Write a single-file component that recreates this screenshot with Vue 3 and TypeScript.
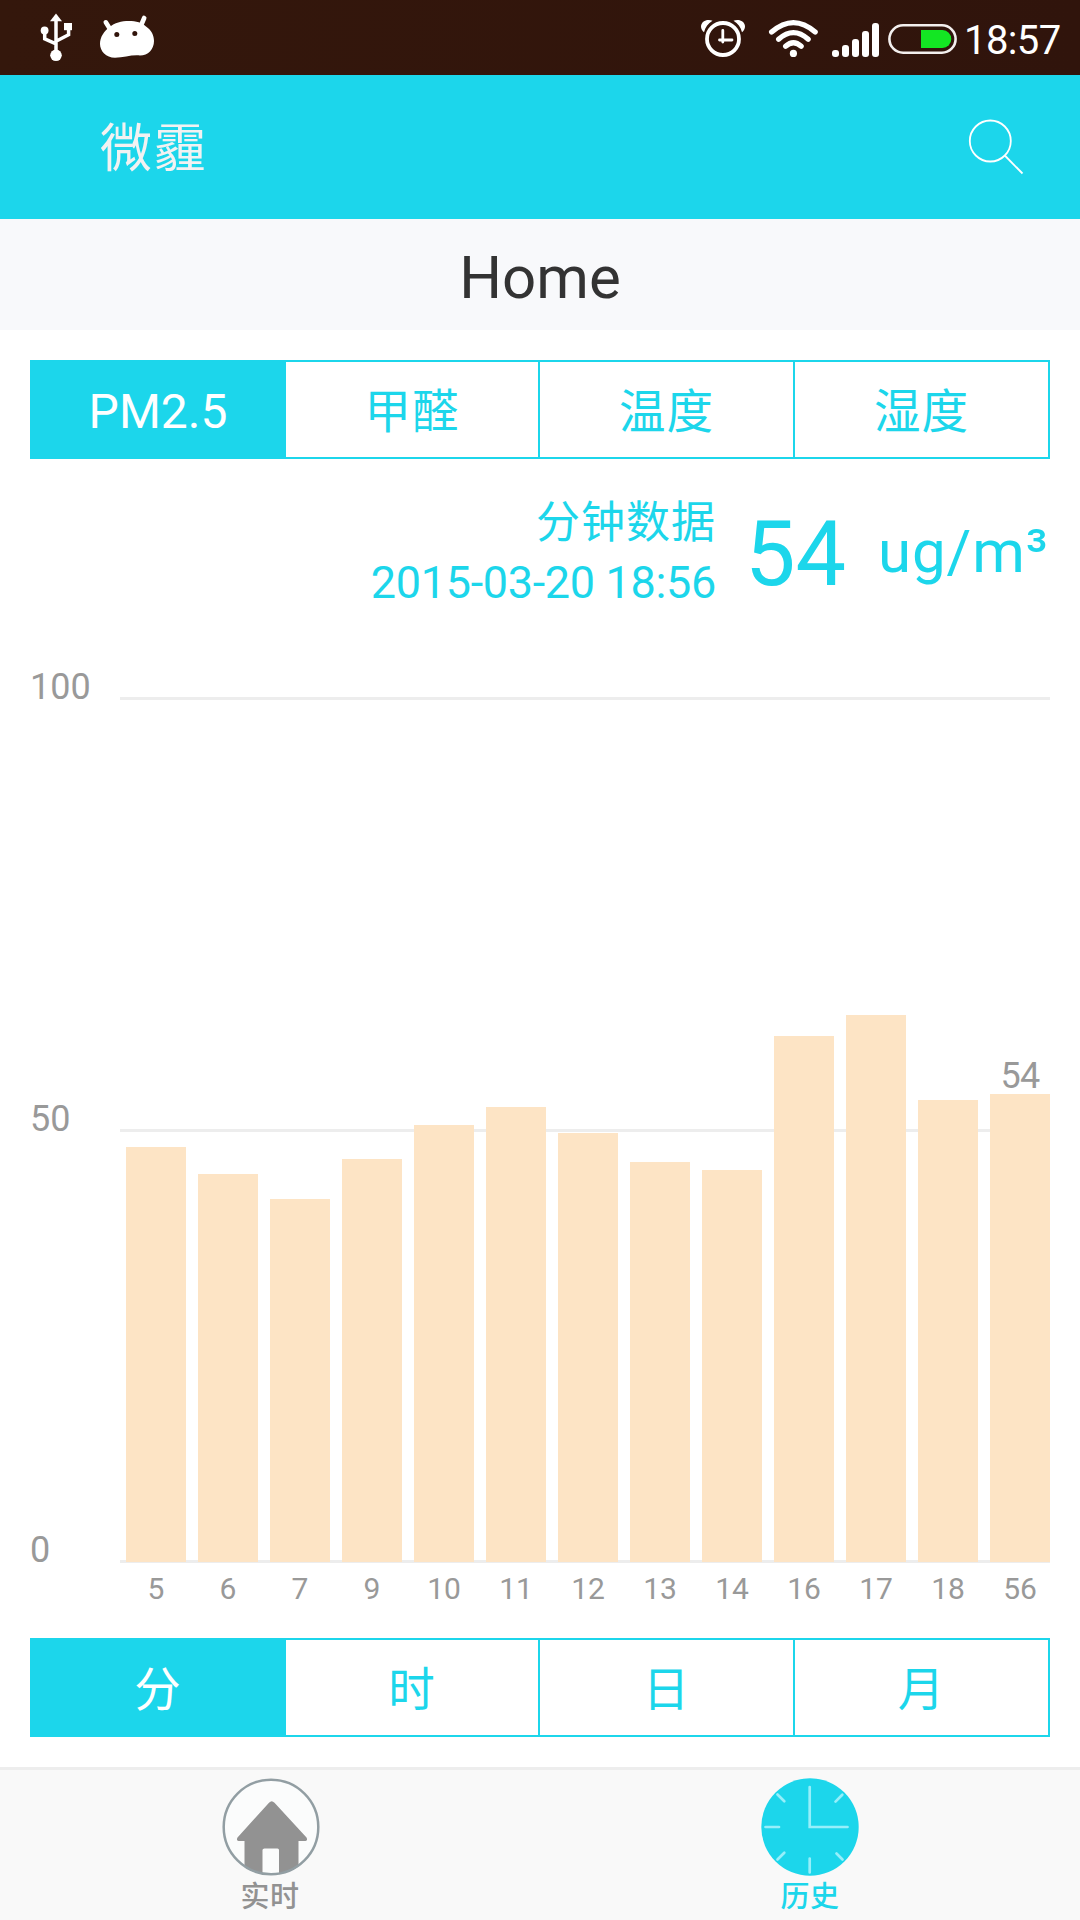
<script setup lang="ts">
import { ref } from 'vue'

interface Bar {
  label: string
  height: number
  value?: number
}

const metrics: string[] = ['PM2.5', '甲醛', '温度', '湿度']
const periods: string[] = ['分', '时', '日', '月']
const ticks: number[] = [100, 50, 0]

const metric = ref(0)
const period = ref(0)

const bars: Bar[] = [
  { label: '5', height: 415 },
  { label: '6', height: 388 },
  { label: '7', height: 363 },
  { label: '9', height: 403 },
  { label: '10', height: 437 },
  { label: '11', height: 455 },
  { label: '12', height: 429 },
  { label: '13', height: 400 },
  { label: '14', height: 392 },
  { label: '16', height: 526 },
  { label: '17', height: 547 },
  { label: '18', height: 462 },
  { label: '56', height: 468, value: 54 },
]
</script>

<template>
  <div class="screen">
    <div class="status">
      <svg class="status-left" width="160" height="75" viewBox="0 0 160 75" fill="#fff">
        <path d="M56 13.5 62 21.2H50Z" />
        <path d="M56 20v32M44.7 32v6.8L56 43.8M68.6 28v6.7L56 41.3" fill="none" stroke="#fff" stroke-width="3.5" />
        <circle cx="56" cy="55.3" r="5.8" />
        <circle cx="44.6" cy="30.5" r="3.9" />
        <rect x="64" y="23" width="8" height="7.2" />
        <path d="M105.8 22.3 110 29M144.2 18l-3 7" stroke="#fff" stroke-width="4.6" stroke-linecap="round" />
        <path d="M110 27C118 19.3 139 19 146 26.5C151.5 30 154 35.5 154 41C154 49.5 148 55.5 140 55.5C132 54.5 124 57.7 115 57.7C106 57.7 100 51 100 44C100 37 104 31 110 27Z" />
        <circle cx="116.8" cy="34.6" r="2.5" fill="#31140b" />
        <circle cx="134.8" cy="33.5" r="2.5" fill="#31140b" />
      </svg>
      <svg class="status-right" width="260" height="75" viewBox="700 0 260 75" fill="#fff">
        <circle cx="723" cy="39" r="16" fill="none" stroke="#fff" stroke-width="3.8" />
        <path d="M722.8 30.5V42M719.5 40H732" fill="none" stroke="#fff" stroke-width="2.8" stroke-linecap="round" />
        <path d="M704 32.3C700 29 700 24 704 21.3C707 19.3 710.5 19.8 712.5 20.8C708 23.5 705.5 27 704 32.3Z" />
        <path d="M742 32.3C746 29 746 24 742 21.3C739 19.3 735.5 19.8 733.5 20.8C738 23.5 740.5 27 742 32.3Z" />
        <g fill="none" stroke="#fff" stroke-width="5.2" stroke-linecap="round">
          <path d="M771.6 32Q793.4 13.2 815.2 32" />
          <path d="M778.6 39.2Q793.4 26 808.2 39.2" />
          <path d="M785.6 46.3Q793.4 39.3 801.2 46.3" />
        </g>
        <circle cx="793.4" cy="53.4" r="3.6" />
        <rect x="832" y="50" width="7" height="7" rx="3" />
        <rect x="842" y="45" width="7" height="12" rx="3" />
        <rect x="852" y="39" width="7" height="18" rx="3" />
        <rect x="862" y="31" width="7" height="26" rx="3" />
        <rect x="872" y="23" width="7" height="34" rx="3" />
        <rect x="889.4" y="25.3" width="66.2" height="27.4" rx="13.7" fill="none" stroke="#f3efee" stroke-width="2.6" />
        <path d="M921 30H942.5A8.8 9 0 0 1 942.5 48H921Z" fill="#13e623" />
      </svg>
      <span class="time">18:57</span>
    </div>

    <header class="header">
      <span class="brand">微霾</span>
      <svg class="search" width="56" height="56" viewBox="968 119 56 56" fill="none" stroke="#fff" stroke-width="1.8">
        <circle cx="990.3" cy="141" r="20.5" />
        <path d="M1004.8 155.5 1022.5 173.5" />
      </svg>
    </header>

    <h1 class="title">Home</h1>

    <nav class="tabs">
      <button v-for="(name, i) in metrics" :key="name" :class="['tab', { active: metric === i, latin: i === 0 }]" @click="metric = i">{{ name }}</button>
    </nav>

    <section class="reading">
      <div class="when">
        <span class="kind">分钟数据</span>
        <span class="date">2015-03-20 18:56</span>
      </div>
      <span class="amount">54</span>
      <span class="unit">ug/m³</span>
    </section>

    <section class="chart">
      <div class="axis">
        <div v-for="t in ticks" :key="t" class="tick">
          <span class="tick-label">{{ t }}</span>
          <span class="line"></span>
        </div>
      </div>
      <div class="bars">
        <div v-for="b in bars" :key="b.label" class="column">
          <span v-if="b.value" class="value">{{ b.value }}</span>
          <div class="bar" :style="{ height: b.height + 'px' }"></div>
        </div>
      </div>
    </section>
    <div class="labels">
      <span v-for="b in bars" :key="b.label">{{ b.label }}</span>
    </div>

    <nav class="tabs periods">
      <button v-for="(name, i) in periods" :key="name" :class="['tab', { active: period === i }]" @click="period = i">{{ name }}</button>
    </nav>

    <footer class="footer">
      <div class="item">
        <svg width="100" height="100" viewBox="0 0 100 100">
          <defs>
            <clipPath id="disc"><circle cx="50" cy="50" r="48" /></clipPath>
          </defs>
          <circle cx="50" cy="50" r="47.5" fill="#fbfcfc" />
          <path clip-path="url(#disc)" d="M50.7 24.2Q52 24.2 53.5 25.8L85.5 60.5Q87 63.5 84.500 64H77.5V100H58V73Q58 71.5 56.5 71.5H43.5Q41.5 71.5 41.5 73V100H23.5V64H17.5Q15 63.5 16.5 60.5L48 25.8Q49.4 24.2 50.7 24.2Z" fill="#929292" />
          <circle cx="50" cy="50" r="47.3" fill="none" stroke="#929ea3" stroke-width="2.5" />
        </svg>
        <span>实时</span>
      </div>
      <div class="item current">
        <svg width="100" height="100" viewBox="0 0 100 100">
          <circle cx="50" cy="50" r="48.7" fill="#1cd6eb" />
          <path d="M49.7 10V50H87.5M5.5 50H19M49.7 81.5V95.5M17.5 17.5 24.3 24.3M82.3 17.8 75.5 24.6M17.5 82.5 24.3 75.7M76.5 76.5 82.5 82.5" fill="none" stroke="#96effa" stroke-width="2.7" stroke-linecap="round" />
        </svg>
        <span>历史</span>
      </div>
    </footer>
  </div>
</template>

<style>
body {
  margin: 0;
  background: #fff;
}
</style>

<style scoped>
.screen {
  width: 1080px;
  height: 1920px;
  display: flex;
  flex-direction: column;
  overflow: hidden;
  background: #fff;
  font-family: Roboto, "Noto Sans CJK SC", sans-serif;
}
.status {
  height: 75px;
  flex: none;
  display: flex;
  background: linear-gradient(90deg, #34170c, #30140c);
}
.status svg {
  display: block;
  flex: none;
}
.status-right {
  margin-left: 540px;
}
.time {
  margin-left: 4px;
  padding-top: 3px;
  font-size: 40px;
  letter-spacing: -0.6px;
  line-height: 76px;
  color: #fff;
  white-space: nowrap;
}
.header {
  height: 144px;
  flex: none;
  box-sizing: border-box;
  padding: 0 56px 0 100px;
  display: flex;
  justify-content: space-between;
  align-items: center;
  background: #1cd6eb;
}
.brand {
  padding-top: 5px;
  font-size: 52px;
  letter-spacing: 2px;
  line-height: 139px;
  color: #f2f2f2;
}
.title {
  height: 105px;
  flex: none;
  margin: 0;
  padding-top: 6px;
  font-size: 60px;
  font-weight: 400;
  line-height: 105px;
  text-align: center;
  color: #333;
  background: #f8f9fb;
}
.tabs {
  flex: none;
  height: 99px;
  margin: 30px 30px 0;
  box-sizing: border-box;
  border: 2px solid #1cd6eb;
  display: flex;
}
.tab {
  flex: 0 0 255px;
  box-sizing: border-box;
  padding: 4px 0 0;
  border: 0;
  border-right: 2px solid #1cd6eb;
  background: #fff;
  color: #1cd6eb;
  font-family: inherit;
  font-size: 46.5px;
  letter-spacing: 1px;
  line-height: 92px;
  text-align: center;
}
.tab.latin {
  font-size: 48px;
  letter-spacing: 0;
  line-height: 91px;
}
.tab:first-child,
.tab:nth-child(2) {
  flex-basis: 254px;
}
.tab:last-child {
  flex-basis: 253px;
  border-right: 0;
}
.tab.active {
  background: #1cd6eb;
  color: #fff;
}
.reading {
  flex: none;
  height: 238px;
  display: flex;
  justify-content: flex-end;
  padding-right: 30px;
  color: #1cd6eb;
  white-space: nowrap;
}
.when {
  display: flex;
  flex-direction: column;
  align-items: flex-end;
  padding-top: 34px;
  font-size: 45px;
  line-height: 61px;
}
.kind {
  font-size: 44px;
  letter-spacing: 1px;
  line-height: 60px;
}
.date {
  letter-spacing: -0.33px;
  line-height: 60px;
}
.amount {
  width: 96px;
  margin-left: 29px;
  font-size: 90px;
  line-height: 192px;
}
.unit {
  width: 172px;
  margin-left: 37px;
  font-size: 60px;
  letter-spacing: 0.9px;
  line-height: 186px;
}
.chart {
  flex: none;
  height: 866px;
  display: grid;
  margin: 0 30px;
}
.axis,
.bars {
  grid-area: 1 / 1;
}
.axis {
  display: flex;
  flex-direction: column;
  justify-content: space-between;
}
.tick {
  height: 3px;
  display: flex;
  align-items: center;
}
.tick-label {
  width: 90px;
  margin-top: -23px;
  font-size: 36px;
  line-height: 40px;
  color: #999;
}
.line {
  flex: 1;
  height: 3px;
  background: #ededed;
}
.bars {
  padding-left: 96px;
  padding-bottom: 1px;
  display: flex;
  gap: 12px;
  align-items: flex-end;
}
.column {
  width: 60px;
  display: flex;
  flex-direction: column;
  align-items: center;
}
.value {
  font-size: 36px;
  letter-spacing: -0.8px;
  line-height: 36px;
  color: #999;
}
.bar {
  width: 60px;
  background: #fde4c5;
}
.labels {
  flex: none;
  height: 45px;
  padding: 0 24px 0 120px;
  display: flex;
  font-size: 30px;
  line-height: 52px;
  color: #999;
}
.labels span {
  width: 72px;
  text-align: center;
}
.footer {
  flex: 1;
  margin-top: 30px;
  border-top: 3px solid #ededed;
  background: #f9f9f9;
  display: flex;
}
.item {
  width: 540px;
  display: flex;
  flex-direction: column;
  align-items: center;
  padding-top: 7px;
  font-size: 29px;
  font-weight: 500;
  letter-spacing: 0.5px;
  line-height: 40px;
  color: #929292;
}
.item svg {
  display: block;
  margin-left: 2px;
}
.item.current {
  color: #1cd6eb;
}
.item.current svg {
  margin-left: 0;
}
</style>
